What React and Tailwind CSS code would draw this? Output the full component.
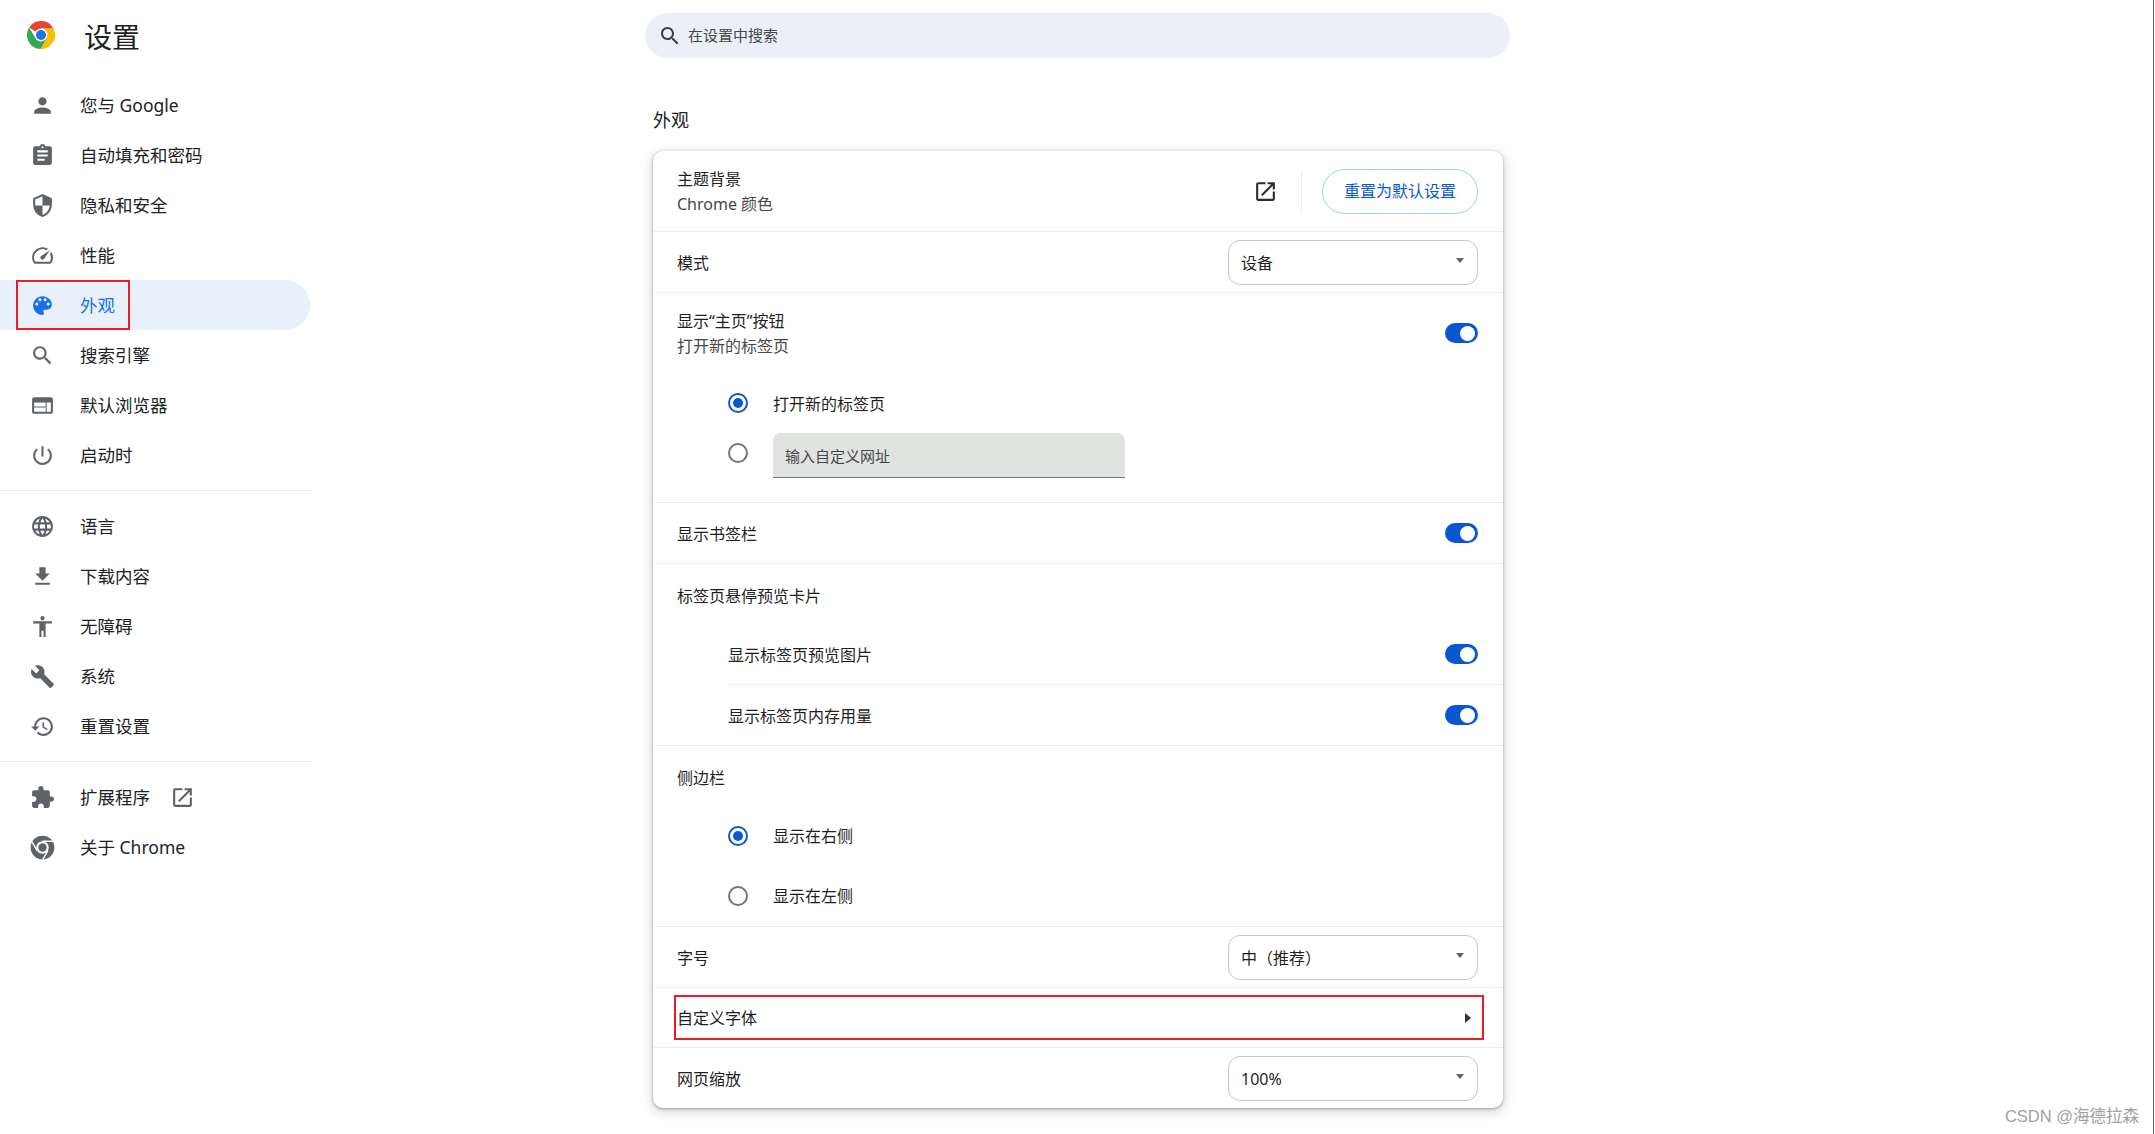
import React from 'react';

const Icon = ({ d, size = 25, className = '' }) => (
    <svg viewBox="0 0 24 24" width={size} height={size} fill="currentColor" className={`shrink-0 ${className}`}>
        <path d={d} />
    </svg>
);

const icons = {
    person: 'M12 12c2.21 0 4-1.79 4-4s-1.79-4-4-4-4 1.79-4 4 1.79 4 4 4zm0 2c-2.67 0-8 1.34-8 4v2h16v-2c0-2.66-5.33-4-8-4z',
    assignment: 'M19 3h-4.18C14.4 1.84 13.3 1 12 1c-1.3 0-2.4.84-2.82 2H5c-1.1 0-2 .9-2 2v14c0 1.1.9 2 2 2h14c1.1 0 2-.9 2-2V5c0-1.1-.9-2-2-2zm-7 0c.55 0 1 .45 1 1s-.45 1-1 1-1-.45-1-1 .45-1 1-1zm2 14H7v-2h7v2zm3-4H7v-2h10v2zm0-4H7V7h10v2z',
    security: 'M12 1L3 5v6c0 5.55 3.84 10.74 9 12 5.16-1.26 9-6.45 9-12V5l-9-4zm0 10.99h7c-.53 4.12-3.28 7.79-7 8.94V12H5V6.3l7-3.11v8.8z',
    speed: 'M20.38 8.57l-1.23 1.85a8 8 0 0 1-.22 7.58H5.07A8 8 0 0 1 15.58 6.85l1.85-1.23A10 10 0 0 0 3.35 19a2 2 0 0 0 1.72 1h13.85a2 2 0 0 0 1.74-1 10 10 0 0 0-.27-10.44zm-9.79 6.84a2 2 0 0 0 2.83 0l5.66-8.49-8.49 5.66a2 2 0 0 0 0 2.83z',
    palette: 'M12 3c-4.97 0-9 4.03-9 9s4.03 9 9 9c.83 0 1.5-.67 1.5-1.5 0-.39-.15-.74-.39-1.01-.23-.26-.38-.61-.38-.99 0-.83.67-1.5 1.5-1.5H16c2.76 0 5-2.24 5-5 0-4.42-4.03-8-9-8zm-5.5 9c-.83 0-1.5-.67-1.5-1.5S5.67 9 6.5 9 8 9.67 8 10.5 7.33 12 6.5 12zm3-4C8.67 8 8 7.33 8 6.5S8.67 5 9.5 5s1.5.67 1.5 1.5S10.33 8 9.5 8zm5 0c-.83 0-1.5-.67-1.5-1.5S13.67 5 14.5 5s1.5.67 1.5 1.5S15.33 8 14.5 8zm3 4c-.83 0-1.5-.67-1.5-1.5S16.67 9 17.5 9s1.5.67 1.5 1.5-.67 1.5-1.5 1.5z',
    search: 'M15.5 14h-.79l-.28-.27C15.41 12.59 16 11.11 16 9.5 16 5.91 13.09 3 9.5 3S3 5.91 3 9.5 5.91 16 9.5 16c1.61 0 3.09-.59 4.23-1.57l.27.28v.79l5 4.99L20.49 19l-4.99-5zm-6 0C7.01 14 5 11.99 5 9.5S7.01 5 9.5 5 14 7.01 14 9.5 11.99 14 9.5 14z',
    web: 'M20 4H4c-1.1 0-1.99.9-1.99 2L2 18c0 1.1.9 2 2 2h16c1.1 0 2-.9 2-2V6c0-1.1-.9-2-2-2zm-5 14H4v-4h11v4zm0-5H4V9h11v4zm5 5h-4V9h4v9z',
    power: 'M13 3h-2v10h2V3zm4.83 2.17l-1.42 1.42C17.99 7.86 19 9.81 19 12c0 3.87-3.13 7-7 7s-7-3.13-7-7c0-2.19 1.01-4.14 2.58-5.42L6.17 5.17C4.23 6.82 3 9.26 3 12c0 4.97 4.03 9 9 9s9-4.03 9-9c0-2.74-1.23-5.18-3.17-6.83z',
    language: 'M11.99 2C6.47 2 2 6.48 2 12s4.47 10 9.99 10C17.52 22 22 17.52 22 12S17.52 2 11.99 2zm6.93 6h-2.95c-.32-1.25-.78-2.45-1.38-3.56 1.84.63 3.37 1.91 4.33 3.56zM12 4.04c.83 1.2 1.48 2.53 1.91 3.96h-3.82c.43-1.43 1.08-2.76 1.91-3.96zM4.26 14C4.1 13.36 4 12.69 4 12s.1-1.36.26-2h3.38c-.08.66-.14 1.32-.14 2 0 .68.06 1.34.14 2H4.26zm.82 2h2.95c.32 1.25.78 2.45 1.38 3.56-1.84-.63-3.37-1.9-4.33-3.56zm2.95-8H5.08c.96-1.66 2.49-2.93 4.33-3.56C8.81 5.55 8.35 6.75 8.03 8zM12 19.96c-.83-1.2-1.48-2.53-1.91-3.96h3.82c-.43 1.43-1.08 2.76-1.91 3.96zM14.34 14H9.66c-.09-.66-.16-1.32-.16-2 0-.68.07-1.35.16-2h4.68c.09.65.16 1.32.16 2 0 .68-.07 1.34-.16 2zm.25 5.56c.6-1.11 1.06-2.31 1.38-3.56h2.95c-.96 1.65-2.49 2.93-4.33 3.56zM16.36 14c.08-.66.14-1.32.14-2 0-.68-.06-1.34-.14-2h3.38c.16.64.26 1.31.26 2s-.1 1.36-.26 2h-3.38z',
    download: 'M19 9h-4V3H9v6H5l7 7 7-7zM5 18v2h14v-2H5z',
    accessibility: 'M12 2c1.1 0 2 .9 2 2s-.9 2-2 2-2-.9-2-2 .9-2 2-2zm9 7h-6v13h-2v-6h-2v6H9V9H3V7h18v2z',
    build: 'M22.7 19l-9.1-9.1c.9-2.3.4-5-1.5-6.9-2-2-5-2.4-7.4-1.3L9 6 6 9 1.6 4.7C.4 7.1.9 10.1 2.9 12.1c1.9 1.9 4.6 2.4 6.9 1.5l9.1 9.1c.4.4 1 .4 1.4 0l2.3-2.3c.5-.4.5-1.1.1-1.4z',
    restore: 'M13 3c-4.97 0-9 4.03-9 9H1l3.89 3.89.07.14L9 12H6c0-3.87 3.13-7 7-7s7 3.13 7 7-3.13 7-7 7c-1.93 0-3.68-.79-4.94-2.06l-1.42 1.42C8.27 19.99 10.51 21 13 21c4.97 0 9-4.03 9-9s-4.03-9-9-9zm-1 5v5l4.28 2.54.72-1.21-3.5-2.08V8H12z',
    extension: 'M20.5 11H19V7c0-1.1-.9-2-2-2h-4V3.5C13 2.12 11.88 1 10.5 1S8 2.12 8 3.5V5H4c-1.1 0-1.99.9-1.99 2v3.8H3.5c1.49 0 2.7 1.21 2.7 2.7s-1.21 2.7-2.7 2.7H2V20c0 1.1.9 2 2 2h3.8v-1.5c0-1.49 1.21-2.7 2.7-2.7 1.49 0 2.7 1.21 2.7 2.7V22H17c1.1 0 2-.9 2-2v-4h1.5c1.38 0 2.5-1.12 2.5-2.5S21.88 11 20.5 11z',
    openNew: 'M19 19H5V5h7V3H5c-1.11 0-2 .9-2 2v14c0 1.1.89 2 2 2h14c1.1 0 2-.9 2-2v-7h-2v7zM14 3v2h3.59l-9.83 9.83 1.41 1.41L19 6.41V10h2V3h-7z',
};

const ChromeLogo = () => (
    <svg viewBox="0 0 24 24" width="28" height="28" className="shrink-0">
        <path fill="#ea4335" d="M22.67 6.5A12 12 0 0 0 1.9 5.51L12 12l0-5.5z" />
        <path fill="#fbbc04" d="M22.67 6.5A12 12 0 0 1 11.43 23.99L12 12l0-5.5z" />
        <path fill="#34a853" d="M11.43 23.99A12 12 0 0 1 1.9 5.51L7.24 14.75 12 12l4.76 2.75z" />
        <circle cx="12" cy="12" r="5.5" fill="#fff" />
        <circle cx="12" cy="12" r="4.3" fill="#1a73e8" />
    </svg>
);

const ChromeGray = () => (
    <svg viewBox="0 0 24 24" width="25" height="25" className="shrink-0">
        <circle cx="12" cy="12" r="11.4" fill="#5f6368" />
        <circle cx="12" cy="12" r="6" fill="#fff" />
        <circle cx="12" cy="12" r="4" fill="#5f6368" />
        <path d="M12 6h10M6.8 15L1.8 6.4M17.2 15l-5 8.6" stroke="#fff" strokeWidth="1.3" fill="none" />
    </svg>
);

const Divider = () => <div className="my-[10px] h-px w-[313px] bg-[#e8eaed]" />;

const NavItem = ({ icon, label, active, children }) => (
    <div
        className={`relative flex h-[50px] w-[310px] items-center gap-[25px] rounded-r-full pl-[30px] text-[17.5px] leading-[25px] ${
            active ? 'bg-[#e8f0fb] text-[#1a6fe8]' : 'text-[#202124]'
        }`}
    >
        <span className={active ? 'text-[#1a6fe8]' : 'text-[#5f6368]'}>
            {icon === 'chrome' ? <ChromeGray /> : <Icon d={icons[icon]} />}
        </span>
        <span>{label}</span>
        {children}
        {active && <div className="absolute inset-y-0 left-[16px] w-[114px] border-2 border-[#ed1c24]" />}
    </div>
);

const Toggle = () => (
    <div className="flex h-[20px] w-[33px] shrink-0 items-center justify-end rounded-full bg-[#0b57d0] pr-[3px]">
        <div className="h-[15px] w-[15px] rounded-full bg-white" />
    </div>
);

const Radio = ({ on, className = '' }) => (
    <div
        className={`flex h-[20px] w-[20px] shrink-0 items-center justify-center rounded-full border-[2.5px] ${
            on ? 'border-[#0b57d0]' : 'border-[#757575]'
        } ${className}`}
    >
        {on && <div className="h-[10px] w-[10px] rounded-full bg-[#0b57d0]" />}
    </div>
);

const Select = ({ value }) => (
    <div className="flex h-[45px] w-[250px] shrink-0 items-center justify-between rounded-[12px] border-[1.5px] border-[#c7c7c7] pl-[12px] pr-[13px] text-[16px] text-[#1f1f1f]">
        <span className="pt-[1px]">{value}</span>
        <span className="mb-[4px] h-0 w-0 border-x-[4.5px] border-t-[5px] border-x-transparent border-t-[#5f6368]" />
    </div>
);

const Row = ({ label, height = 'h-[61px]', border = true, children }) => (
    <div
        className={`flex items-center justify-between pl-[24px] pr-[25px] text-[16px] text-[#1f1f1f] ${height} ${
            border ? 'border-b border-[#ececec]' : ''
        }`}
    >
        <span className="pt-[1px]">{label}</span>
        {children}
    </div>
);

const RadioRow = ({ on, label, border }) => (
    <div className={`flex items-center gap-[25px] pl-[75px] text-[16px] text-[#1f1f1f] ${border ? 'h-[61px] border-b border-[#ececec]' : 'h-[60px]'}`}>
        <Radio on={on} />
        <span>{label}</span>
    </div>
);

export default function App() {
    return (
        <div
            className="relative flex h-[1134px] w-full overflow-hidden bg-white"
            style={{ fontFamily: '"Noto Sans", "Noto Sans CJK SC", sans-serif' }}
        >
            {/* Sidebar */}
            <aside className="w-[330px] shrink-0">
                <div className="flex h-[80px] items-start gap-[29px] pl-[27px] pt-[21px]">
                    <ChromeLogo />
                    <h1 className="text-[28px] leading-[32px] text-[#202124]">设置</h1>
                </div>
                <NavItem icon="person" label="您与 Google" />
                <NavItem icon="assignment" label="自动填充和密码" />
                <NavItem icon="security" label="隐私和安全" />
                <NavItem icon="speed" label="性能" />
                <NavItem icon="palette" label="外观" active />
                <NavItem icon="search" label="搜索引擎" />
                <NavItem icon="web" label="默认浏览器" />
                <NavItem icon="power" label="启动时" />
                <Divider />
                <NavItem icon="language" label="语言" />
                <NavItem icon="download" label="下载内容" />
                <NavItem icon="accessibility" label="无障碍" />
                <NavItem icon="build" label="系统" />
                <NavItem icon="restore" label="重置设置" />
                <Divider />
                <NavItem icon="extension" label="扩展程序">
                    <span className="-ml-[5px] text-[#5f6368]">
                        <Icon d={icons.openNew} />
                    </span>
                </NavItem>
                <NavItem icon="chrome" label="关于 Chrome" />
            </aside>

            {/* Main */}
            <main className="flex-1 pl-[315px] pt-[13px]">
                <div className="flex h-[45px] w-[865px] items-center gap-[6px] rounded-full bg-[#eceff8] pl-[13px] text-[15px] text-[#474747]">
                    <span className="text-[#3c4043]">
                        <Icon d={icons.search} size={24} />
                    </span>
                    <span className="pb-[1px]">在设置中搜索</span>
                </div>

                <h2 className="ml-[8px] mt-[50px] mb-[18px] h-[25px] text-[18px] leading-[25px] text-[#202124]">外观</h2>

                <section className="relative ml-[8px] w-[850px] rounded-[10px] bg-white shadow-[0_1px_3px_rgba(60,64,67,0.45),0_3px_10px_3px_rgba(60,64,67,0.15)]">
                    {/* Theme */}
                    <div className="flex h-[81px] items-center justify-between border-b border-[#ececec] pl-[24px] pr-[25px] text-[16px]">
                        <div className="pt-[1px] leading-[25px]">
                            <div className="text-[#1f1f1f]">主题背景</div>
                            <div className="text-[#474747]">Chrome 颜色</div>
                        </div>
                        <div className="flex items-center">
                            <span className="text-[#2b2b2b]">
                                <Icon d={icons.openNew} />
                            </span>
                            <div className="ml-[23px] mr-[20px] h-[40px] w-px bg-[#e8eaed]" />
                            <div className="flex h-[45px] w-[156px] items-center justify-center rounded-full border border-[#a8c7fa] text-[#0b57d0]">
                                重置为默认设置
                            </div>
                        </div>
                    </div>

                    <Row label="模式">
                        <Select value="设备" />
                    </Row>

                    {/* Home button */}
                    <div className="h-[210px] border-b border-[#ececec] text-[16px] text-[#1f1f1f]">
                        <div className="flex h-[80px] items-center justify-between pl-[24px] pr-[25px]">
                            <div className="pt-[1px] leading-[25px]">
                                <div>显示“主页”按钮</div>
                                <div className="text-[#474747]">打开新的标签页</div>
                            </div>
                            <Toggle />
                        </div>
                        <div className="mt-[5px] flex h-[50px] items-center gap-[25px] pl-[75px]">
                            <Radio on />
                            <span className="pt-[1px]">打开新的标签页</span>
                        </div>
                        <div className="mt-[5px] flex items-center gap-[25px] pl-[75px]">
                            <Radio className="mb-[5px]" />
                            <div className="flex h-[45px] w-[352px] items-center rounded-t-[8px] border-b-[1.5px] border-[#747775] bg-[#e1e3e1] pl-[12px] pt-[2px] text-[15px] text-[#474747]">
                                输入自定义网址
                            </div>
                        </div>
                    </div>

                    <Row label="显示书签栏">
                        <Toggle />
                    </Row>

                    {/* Tab hover cards */}
                    <div className="border-b border-[#ececec] text-[16px] text-[#1f1f1f]">
                        <div className="flex h-[60px] items-center pl-[24px] pt-[3px]">标签页悬停预览卡片</div>
                        <div className="ml-[75px] flex h-[61px] items-center justify-between border-b border-[#ececec] pr-[25px]">
                            <span className="pt-[1px]">显示标签页预览图片</span>
                            <Toggle />
                        </div>
                        <div className="ml-[75px] flex h-[60px] items-center justify-between pr-[25px]">
                            <span className="pt-[1px]">显示标签页内存用量</span>
                            <Toggle />
                        </div>
                    </div>

                    {/* Side panel */}
                    <div className="flex h-[60px] items-center pl-[24px] pt-[3px] text-[16px] text-[#1f1f1f]">侧边栏</div>
                    <RadioRow on label="显示在右侧" />
                    <RadioRow label="显示在左侧" border />

                    <Row label="字号">
                        <Select value="中（推荐）" />
                    </Row>

                    <div className="relative">
                        <Row label="自定义字体" height="h-[60px]">
                            <span className="mr-[7px] h-0 w-0 border-y-[5.5px] border-l-[6px] border-y-transparent border-l-[#333]" />
                        </Row>
                        <div className="absolute left-[21px] top-[7px] h-[45px] w-[810px] border-2 border-[#ed1c24]" />
                    </div>

                    <Row label="网页缩放" height="h-[60px]" border={false}>
                        <Select value="100%" />
                    </Row>
                </section>
            </main>

            <div className="h-full w-px shrink-0 bg-[#666]" />
            <div className="w-px shrink-0" />

            <div
                className="absolute bottom-[8px] right-[16px] text-[16.5px] leading-[20px] text-[#a0a0a0]"
                style={{ fontFamily: '"Liberation Sans", "Noto Sans CJK SC", sans-serif' }}
            >
                CSDN @海德拉森
            </div>
        </div>
    );
}
